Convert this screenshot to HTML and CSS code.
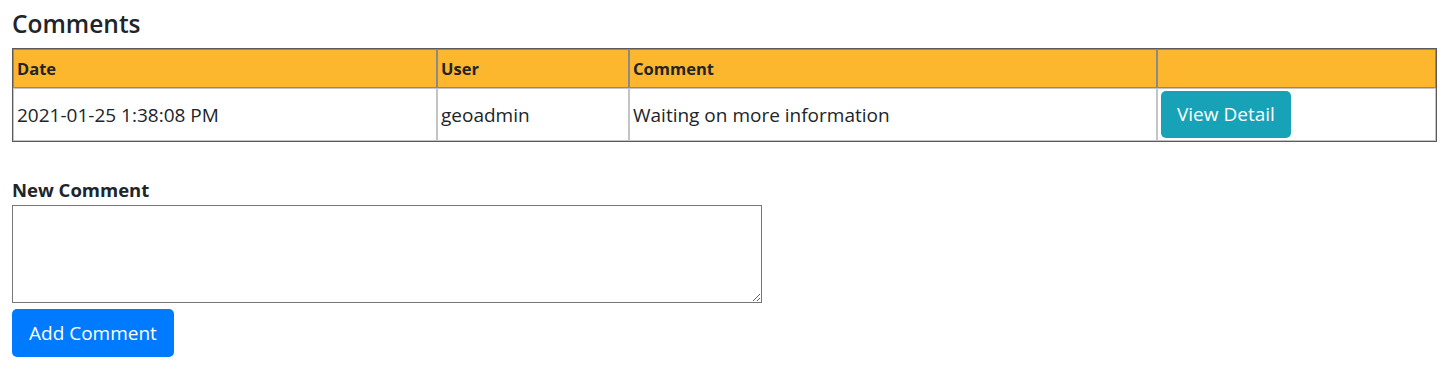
FILE: index.html
```html
<!DOCTYPE html>
<html>
<head>
<meta charset="utf-8">
<link rel="stylesheet" href="styles.css">
</head>
<body>
<div class="page">
  <h5 class="title">Comments</h5>
  <table class="comments">
    <colgroup>
      <col class="c-date"><col class="c-user"><col class="c-comment"><col class="c-action">
    </colgroup>
    <thead>
      <tr><th>Date</th><th>User</th><th>Comment</th><th></th></tr>
    </thead>
    <tbody>
      <tr>
        <td>2021-01-25 1:38:08 PM</td>
        <td>geoadmin</td>
        <td>Waiting on more information</td>
        <td><button class="btn btn-info">View Detail</button></td>
      </tr>
    </tbody>
  </table>
  <div class="new-comment">
    <label class="label" for="nc">New Comment</label>
    <textarea id="nc" class="area"></textarea>
    <button class="btn btn-primary">Add Comment</button>
  </div>
</div>
</body>
</html>
```
FILE: styles.css
```css
html, body {
  margin: 0;
  padding: 0;
  background: #fff;
}
body {
  font-family: "Open Sans", "Noto Sans", sans-serif;
  color: #212529;
  font-size: 19px;
}
.page {
  padding: 8px 5px 0 12px;
}
.title {
  margin: 0 0 8px 0;
  font-size: 24.5px;
  font-weight: 600;
  line-height: 32px;
}
.comments {
  width: 1425px;
  border-collapse: separate;
  border-spacing: 0;
  border: 1px solid #5a5a5a;
}
.c-date { width: 424px; }
.c-user { width: 192px; }
.c-comment { width: 528px; }
.c-action { width: auto; }
.comments th {
  background: #fdb72f;
  font-size: 16.5px;
  font-weight: 700;
  text-align: left;
  height: 37px;
  padding: 0 3px;
  border: 1px solid #8a8a8a;
  vertical-align: middle;
}
.comments td {
  padding: 1px 3px;
  height: 49px;
  border: 1px solid #c4c4c4;
  vertical-align: middle;
}
.btn {
  font-family: inherit;
  font-size: 19px;
  line-height: 1.5;
  border: 0;
  border-radius: 5px;
  color: #fff;
  padding: 0 16px;
  height: 47px;
  cursor: pointer;
}
.btn-info { background: #17a2b8; }
.btn-primary { background: #007bff; height: 48px; padding: 0 17px; }
.new-comment {
  margin-top: 36px;
  display: flex;
  flex-direction: column;
  align-items: flex-start;
}
.label {
  font-weight: 700;
  font-size: 18.5px;
  line-height: 24px;
  margin-bottom: 3px;
}
.area {
  box-sizing: border-box;
  width: 750px;
  height: 98px;
  border: 1px solid #767676;
  border-radius: 0;
  margin: 0 0 6px 0;
  padding: 2px;
  resize: both;
  font-family: inherit;
}
```
